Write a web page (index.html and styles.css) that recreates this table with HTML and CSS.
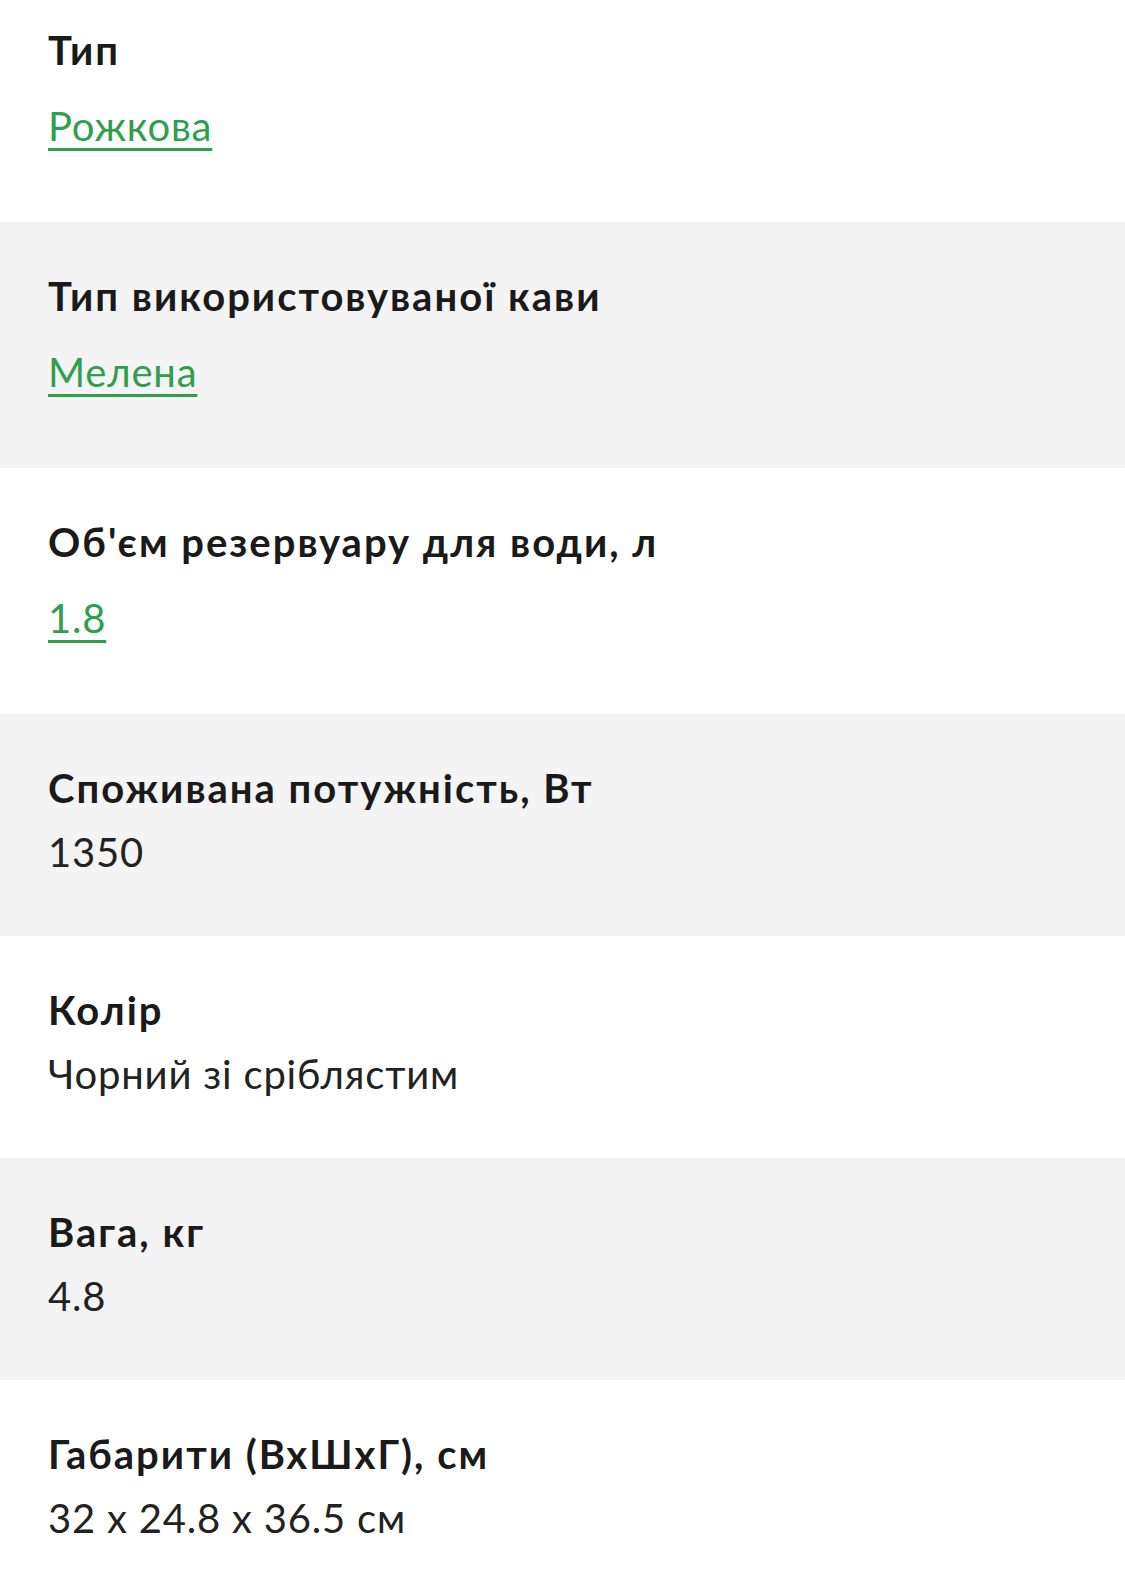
FILE: index.html
```html
<!DOCTYPE html>
<html lang="uk">
<head>
<meta charset="utf-8">
<title>Характеристики</title>
<link rel="stylesheet" href="styles.css">
</head>
<body>
<div class="specs">
  <div class="row first">
    <div class="label">Тип</div>
    <div class="value link"><a href="#">Рожкова</a></div>
  </div>
  <div class="row alt">
    <div class="label">Тип використовуваної кави</div>
    <div class="value link"><a href="#">Мелена</a></div>
  </div>
  <div class="row">
    <div class="label">Об'єм резервуару для води, л</div>
    <div class="value link"><a href="#">1.8</a></div>
  </div>
  <div class="row alt">
    <div class="label">Споживана потужність, Вт</div>
    <div class="value">1350</div>
  </div>
  <div class="row">
    <div class="label">Колір</div>
    <div class="value">Чорний зі сріблястим</div>
  </div>
  <div class="row alt">
    <div class="label">Вага, кг</div>
    <div class="value">4.8</div>
  </div>
  <div class="row">
    <div class="label">Габарити (ВхШхГ), см</div>
    <div class="value">32 x 24.8 x 36.5 см</div>
  </div>
</div>
</body>
</html>
```

FILE: styles.css
```css
html, body {
  margin: 0;
  padding: 0;
  background: #ffffff;
}

body {
  font-family: "Lato", "Noto Sans", sans-serif;
  color: #1b1b1b;
  overflow: hidden;
}

.specs {
  display: flex;
  flex-direction: column;
}

.row {
  padding: 50px 48px 60px;
  background: #ffffff;
}

.row.first {
  padding-top: 26px;
}

.row.alt {
  background: #f4f4f4;
}

.label {
  font-size: 40px;
  line-height: 48px;
  font-weight: 700;
  letter-spacing: 2px;
  color: #1a1a1a;
}

.value {
  margin-top: 16px;
  font-size: 40px;
  line-height: 48px;
  font-weight: 400;
  letter-spacing: 0.8px;
  color: #222222;
}

.value.link {
  padding: 12px 0;
}

.value.link a {
  color: #2f9e4f;
  text-decoration: underline;
  text-decoration-thickness: 3px;
  text-underline-offset: 7px;
}
```
